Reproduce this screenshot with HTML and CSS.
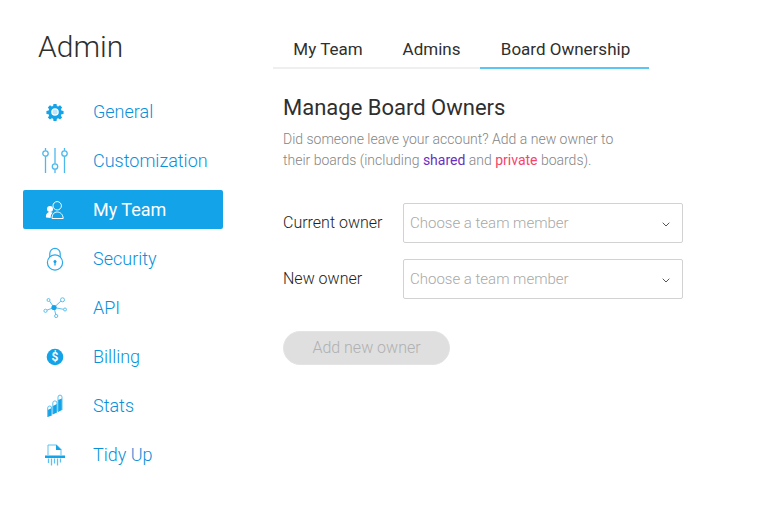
FILE: index.html
```html
<!DOCTYPE html>
<html lang="en">
<head>
<meta charset="utf-8">
<title>Admin</title>
<link rel="stylesheet" href="styles.css">
</head>
<body>
<div class="page">
  <aside class="sidebar">
    <h1 class="title">Admin</h1>
    <nav class="nav">
      <a class="nav-item"><span class="nav-icon"><svg width="18" height="18" viewBox="0 0 20 20"><path fill="#12a3e8" d="M8.300 1h3.400l.4 2.400 1.500.6 2-1.400 2.300 2.300-1.400 2 .6 1.500 2.400.4v3.400l-2.400.4-.6 1.500 1.400 2-2.300 2.300-2-1.400-1.500.6-.4 2.400H8.300l-.4-2.400-1.500-.6-2 1.400-2.300-2.300 1.400-2-.6-1.500-2.400-.4V8.800l2.400-.4.6-1.500-1.400-2 2.300-2.300 2 1.400 1.500-.6z"/><circle cx="10" cy="10" r="4.200" fill="#fff"/><circle cx="10" cy="10" r="2.800" fill="#bfe6f9"/></svg></span><span>General</span></a>
      <a class="nav-item"><span class="nav-icon"><svg width="26" height="26" viewBox="0 0 26 26" fill="none" stroke="#4db8ee" stroke-width="1.300"><path d="M3.500 0v2.800M3.500 8.200V25M13 0v15.800M13 21.200V25M22.500 0v2.800M22.500 8.200V25"/><circle cx="3.500" cy="5.500" r="2.700"/><circle cx="13" cy="18.500" r="2.700"/><circle cx="22.500" cy="5.500" r="2.700"/></svg></span><span>Customization</span></a>
      <a class="nav-item active"><span class="nav-icon"><svg width="20" height="20" viewBox="0 0 20 20"><circle cx="12.200" cy="5.800" r="4.200" fill="none" stroke="#fff" stroke-width="1"/><path d="M7 18.500c0-4 2-6.500 5.200-6.500s5.800 2.500 6 6.500z" fill="none" stroke="#fff" stroke-width="1"/><circle cx="5" cy="9" r="3" fill="#fff"/><path d="M1 17.500c-.4-3 1-5.500 4-5.500 1.200 0 2 .3 2.600.8C6.400 14 5.700 15.500 5.600 18z" fill="#fff"/></svg></span><span>My Team</span></a>
      <a class="nav-item"><span class="nav-icon"><svg width="20" height="24" viewBox="0 0 20 24" fill="none" stroke="#2aaaea" stroke-width="1.200"><circle cx="10" cy="15.500" r="7.600"/><path d="M4.800 10V6.500a5.200 5.200 0 0 1 10.400 0V10"/><circle cx="10" cy="14.500" r="1.500" fill="#12a3e8" stroke="none"/><path d="M10 15v3.500" stroke="#12a3e8" stroke-width="1.300"/></svg></span><span>Security</span></a>
      <a class="nav-item"><span class="nav-icon"><svg width="24" height="22" viewBox="0 0 24 22" fill="none" stroke="#5cc0f0" stroke-width="1"><path d="M11 10.500L6.500 4M11 10.500L19 3M11 10.500L3 13.500M11 10.500L21.500 12.500M11 10.500L13 18.500"/><circle cx="11" cy="10.500" r="2.600" fill="#12a3e8" stroke="none"/><circle cx="5.500" cy="3" r="1.500" fill="#fff"/><circle cx="19.500" cy="2.800" r="2" fill="#fff"/><circle cx="2.500" cy="13.800" r="1.600" fill="#fff"/><circle cx="22" cy="12.500" r="1.500" fill="#fff"/><circle cx="13.200" cy="19" r="1.600" fill="#fff"/></svg></span><span>API</span></a>
      <a class="nav-item"><span class="nav-icon"><svg width="18" height="18" viewBox="0 0 18 18"><circle cx="9" cy="9" r="8.300" fill="#12a3e8"/><text class="dollar" x="9" y="13.200" text-anchor="middle">$</text></svg></span><span>Billing</span></a>
      <a class="nav-item"><span class="nav-icon"><svg width="18" height="24" viewBox="0 0 18 24"><path d="M1.700 23v-7l4-2v7.500zM6.800 20.500v-8.500l4.200-2v8.500zM12 18V6l4-1.500V16z" fill="#12a3e8"/><path d="M1.700 23V14a2 2 0 0 1 4 0v7.500M6.800 20V9a2.100 2.100 0 0 1 4.200 0v9M12 17V3.100a2 2 0 0 1 4 0v12.900" fill="none" stroke="#5cc0f0" stroke-width="1"/></svg></span><span>Stats</span></a>
      <a class="nav-item"><span class="nav-icon"><svg width="22" height="24" viewBox="0 0 22 24"><path d="M4 12V2h8.500L17 6.500V12" fill="none" stroke="#5cc0f0" stroke-width="1"/><path d="M12 1.500V7h5.500z" fill="#12a3e8"/><path d="M1 12.500h20V15H1z" fill="#12a3e8"/><path d="M4.500 15.500v4.500M7.500 15.500v7M10.500 15.500v5M13.500 15.500v7M16.500 15.500v4" stroke="#5cc0f0" stroke-width="1.300" fill="none"/></svg></span><span>Tidy Up</span></a>
    </nav>
  </aside>
  <main class="main">
    <div class="tabs">
      <a class="tab tab-a">My Team</a>
      <a class="tab tab-b">Admins</a>
      <a class="tab tab-c current">Board Ownership</a>
    </div>
    <section class="content">
      <h2 class="heading">Manage Board Owners</h2>
      <p class="lead">Did someone leave your account? Add a new owner to<br>their boards (including <span class="shared">shared</span> and <span class="private">private</span> boards).</p>
      <div class="form">
        <div class="row"><label class="label">Current owner</label><div class="select"><span>Choose a team member</span><svg class="chevron" width="8" height="5" viewBox="0 0 8 5" fill="none" stroke="#555" stroke-width="1"><path d="M.7.7L4 4l3.300-3.300"/></svg></div></div>
        <div class="row"><label class="label">New owner</label><div class="select"><span>Choose a team member</span><svg class="chevron" width="8" height="5" viewBox="0 0 8 5" fill="none" stroke="#555" stroke-width="1"><path d="M.7.7L4 4l3.300-3.300"/></svg></div></div>
      </div>
      <div class="button">Add new owner</div>
    </section>
  </main>
</div>
</body>
</html>
```
FILE: styles.css
```css
html, body {
  margin: 0;
  padding: 0;
  background: #fff;
}
body {
  font-family: Roboto, "Liberation Sans", sans-serif;
  width: 778px;
  height: 511px;
  overflow: hidden;
}
.page {
  display: flex;
  height: 511px;
}
.sidebar {
  width: 200px;
  margin-left: 23px;
  padding-top: 28px;
  flex: none;
}
.title {
  margin: 0 0 26px 15px;
  font-size: 30px;
  line-height: 38px;
  font-weight: 300;
  color: #2f2f2f;
}
.nav {
  display: flex;
  flex-direction: column;
  gap: 10px;
}
.nav-item {
  display: flex;
  align-items: center;
  height: 39px;
  border-radius: 2px;
  font-size: 18px;
  font-weight: 300;
  color: #0a90da;
}
.nav-item.active {
  background: #12a3e8;
  color: #fff;
  font-weight: 400;
}
.nav-icon {
  width: 70px;
  padding-right: 6px;
  box-sizing: border-box;
  display: flex;
  justify-content: center;
  flex: none;
}
.dollar {
  font-size: 12px;
  font-weight: 700;
  fill: #fff;
}
.main {
  margin-left: 50px;
  flex: none;
  padding-top: 31px;
}
.tabs {
  display: flex;
  width: 376px;
  height: 36px;
  border-bottom: 2px solid #efefef;
}
.tab {
  font-size: 17px;
  line-height: 37px;
  height: 36px;
  color: #2f2f2f;
  text-align: center;
}
.tab-a { width: 110px; }
.tab-b { width: 97px; }
.tab-c {
  width: 167px;
  padding-left: 2px;
}
.tab.current {
  border-bottom: 2px solid #5cc6f2;
}
.content {
  padding-left: 10px;
}
.heading {
  margin: 25px 0 0;
  font-size: 22px;
  line-height: 28px;
  font-weight: 400;
  color: #2f2f2f;
}
.lead {
  margin: 7px 0 0;
  font-size: 14px;
  line-height: 21px;
  font-weight: 300;
  color: #858585;
}
.shared { color: #6a2fc0; font-weight: 400; }
.private { color: #f4456b; font-weight: 400; }
.form {
  margin-top: 32px;
  display: flex;
  flex-direction: column;
  gap: 16px;
}
.row {
  display: flex;
  align-items: center;
}
.label {
  width: 120px;
  padding-bottom: 2px;
  font-size: 16px;
  font-weight: 300;
  color: #222;
  flex: none;
}
.select {
  width: 280px;
  height: 40px;
  box-sizing: border-box;
  border: 1px solid #d2d2d2;
  border-radius: 2px;
  display: flex;
  align-items: center;
  justify-content: space-between;
  padding: 0 12px 0 6px;
  font-size: 15px;
  font-weight: 300;
  color: #a8a8a8;
}
.chevron {
  margin-top: 2px;
}
.button {
  margin-top: 32px;
  width: 167px;
  height: 34px;
  box-sizing: border-box;
  border: 1px solid #e4e4e4;
  border-radius: 17px;
  background: #dfdfdf;
  color: #b0b0b0;
  font-size: 16px;
  line-height: 31px;
  text-align: center;
  font-weight: 300;
}
```
